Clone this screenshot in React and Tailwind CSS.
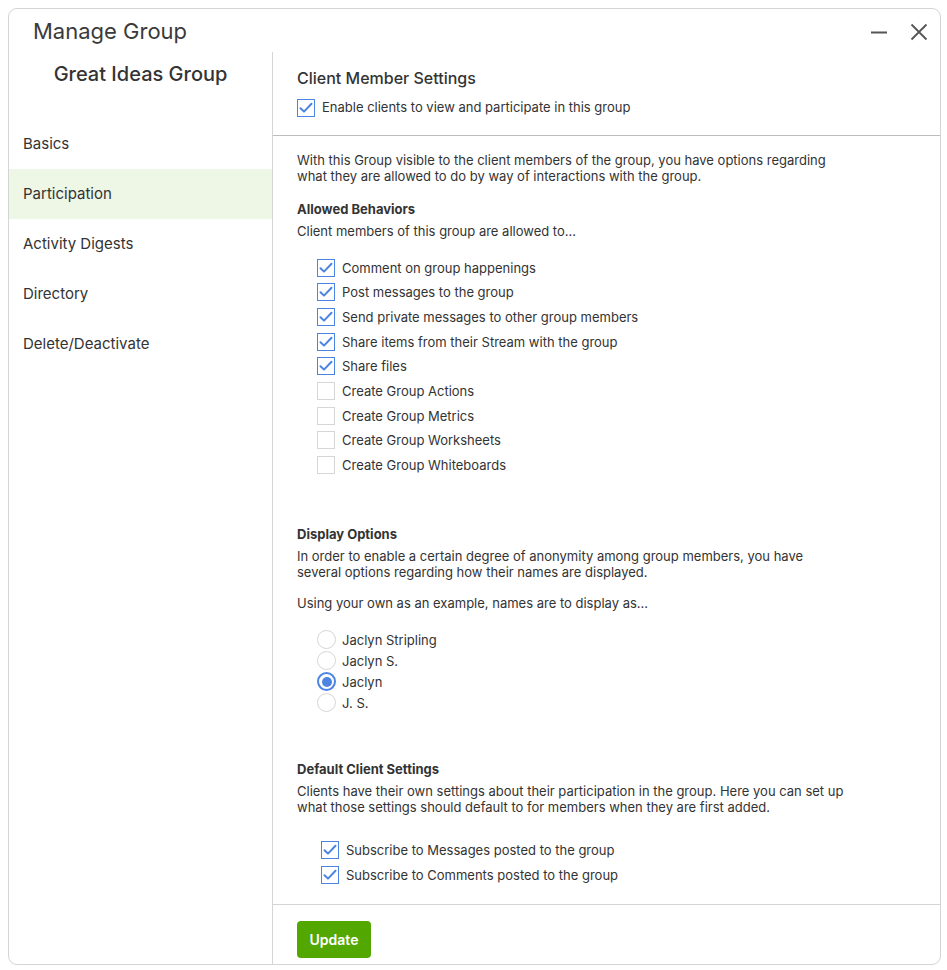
import React from "react";

const font = { fontFamily: "Inter, 'Noto Sans', sans-serif" };

function Check({ checked }) {
  return (
    <span
      className={`flex h-[18px] w-[18px] shrink-0 items-center justify-center border ${
        checked ? "border-[#4c84e4]" : "border-[#d6d6d6]"
      } bg-white`}
    >
      {checked && (
        <svg width="14" height="12" viewBox="0 0 14 12" fill="none">
          <path d="M1.5 6.2 L5 9.6 L12.5 1.8" stroke="#4c84e4" strokeWidth="2" strokeLinecap="round" strokeLinejoin="round" />
        </svg>
      )}
    </span>
  );
}

function Radio({ checked }) {
  return checked ? (
    <span className="flex h-[19px] w-[19px] shrink-0 items-center justify-center rounded-full border-2 border-[#4c84e4] bg-white">
      <span className="h-[10px] w-[10px] rounded-full bg-[#4c84e4]" />
    </span>
  ) : (
    <span className="h-[19px] w-[19px] shrink-0 rounded-full border border-[#d6d6d6] bg-white" />
  );
}

const behaviors = [
  ["Comment on group happenings", true],
  ["Post messages to the group", true],
  ["Send private messages to other group members", true],
  ["Share items from their Stream with the group", true],
  ["Share files", true],
  ["Create Group Actions", false],
  ["Create Group Metrics", false],
  ["Create Group Worksheets", false],
  ["Create Group Whiteboards", false],
];

const names = [
  ["Jaclyn Stripling", false],
  ["Jaclyn S.", false],
  ["Jaclyn", true],
  ["J. S.", false],
];

const nav = ["Basics", "Participation", "Activity Digests", "Directory", "Delete/Deactivate"];

export default function App() {
  return (
    <div className="min-h-[970px] w-[947px] bg-white p-2 text-[#333]" style={font}>
      <div className="flex h-[957px] w-[933px] flex-col overflow-hidden rounded-[9px] border border-[#d4d4d4] bg-white">
        <div className="flex h-[43px] shrink-0 items-center justify-between pl-6 pr-3">
          <div className="pt-[2px] text-[22px] text-[#3a3a3a]">Manage Group</div>
          <div className="flex items-center gap-[22px] pt-[2px]">
            <svg width="18" height="18" viewBox="0 0 18 18">
              <path d="M1 9.5 H17" stroke="#555" strokeWidth="1.8" />
            </svg>
            <svg width="18" height="18" viewBox="0 0 18 18">
              <path d="M1.5 1.5 L16.5 16.5 M16.5 1.5 L1.5 16.5" stroke="#555" strokeWidth="1.8" />
            </svg>
          </div>
        </div>
        <div className="flex min-h-0 flex-1">
          <div className="w-[264px] shrink-0 border-r border-[#d4d4d4]">
            <div className="pt-[7px] text-center text-[20px] font-medium text-[#333]">Great Ideas Group</div>
            <div className="mt-[30px]">
              {nav.map((n) => (
                <div
                  key={n}
                  className={`flex h-[50px] items-center pl-[14px] text-[15px] text-[#333] ${
                    n === "Participation" ? "bg-[#eef6e6]" : ""
                  }`}
                >
                  {n}
                </div>
              ))}
            </div>
          </div>
          <div className="flex min-w-0 flex-1 flex-col">
            <div className="border-b border-[#bdbdbd] px-6 pb-[17px] pt-[14px]">
              <div className="text-[16px] font-medium text-[#333]">Client Member Settings</div>
              <div className="mt-[8px] flex items-center gap-[7px] text-[13px]">
                <Check checked />
                <span>Enable clients to view and participate in this group</span>
              </div>
            </div>
            <div className="flex-1 px-6 pt-[16px] text-[13px] leading-[16px]">
              <p className="w-[540px]">
                With this Group visible to the client members of the group, you have options regarding what they are allowed to do by way of interactions with the group.
              </p>
              <div className="mt-[17px] font-bold">Allowed Behaviors</div>
              <div className="mt-[6px]">Client members of this group are allowed to...</div>
              <div className="mt-[20px] flex flex-col gap-[6.7px] pl-5">
                {behaviors.map(([t, c]) => (
                  <div key={t} className="flex h-[18px] items-center gap-[7px]">
                    <Check checked={c} />
                    <span>{t}</span>
                  </div>
                ))}
              </div>
              <div className="mt-[52px] font-bold">Display Options</div>
              <p className="mt-[6px] w-[530px]">
                In order to enable a certain degree of anonymity among group members, you have several options regarding how their names are displayed.
              </p>
              <p className="mt-[15px]">Using your own as an example, names are to display as...</p>
              <div className="mt-[19px] flex flex-col gap-[2px] pl-5">
                {names.map(([t, c]) => (
                  <div key={t} className="flex h-[19px] items-center gap-[6px]">
                    <Radio checked={c} />
                    <span>{t}</span>
                  </div>
                ))}
              </div>
              <div className="mt-[49px] font-bold">Default Client Settings</div>
              <p className="mt-[6px] w-[560px]">
                Clients have their own settings about their participation in the group. Here you can set up what those settings should default to for members when they are first added.
              </p>
              <div className="mt-[26px] flex flex-col gap-[7px] pl-6">
                {["Subscribe to Messages posted to the group", "Subscribe to Comments posted to the group"].map((t) => (
                  <div key={t} className="flex h-[18px] items-center gap-[7px]">
                    <Check checked />
                    <span>{t}</span>
                  </div>
                ))}
              </div>
            </div>
            <div className="h-[60px] shrink-0 border-t border-[#d4d4d4] px-6 pt-4">
              <button className="h-[37px] w-[74px] rounded-[4px] bg-[#52a800] text-[14px] font-semibold text-white">
                Update
              </button>
            </div>
          </div>
        </div>
      </div>
    </div>
  );
}
